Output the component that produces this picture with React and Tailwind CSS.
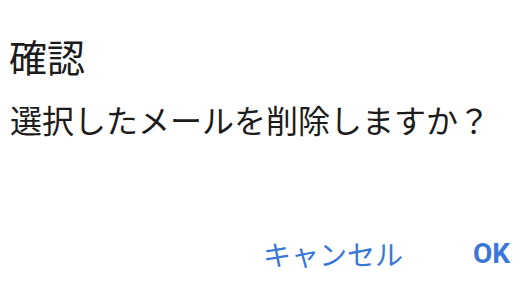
export default function App() {
  return (
    <div
      className="w-[530px] h-[288px] bg-white flex flex-col"
      style={{ fontFamily: '"Noto Sans CJK JP", "Noto Sans", sans-serif' }}
    >
      <div className="pl-[9px] pt-[35px] text-[38px] leading-[42px] font-normal text-[#1c1c1c]">確認</div>
      <div className="pl-[10px] pt-[22px] text-[32px] leading-[40px] text-[#1c1c1c]">
        選択したメールを削除しますか？
      </div>
      <div className="mt-auto mb-[16px] flex items-center justify-end gap-[70px] pr-[20px] text-[#3a77d6]">
        <button className="text-[28px] leading-[36px]">キャンセル</button>
        <button className="text-[28px] leading-[36px] font-bold" style={{ fontFamily: 'Roboto, "Noto Sans", sans-serif' }}>OK</button>
      </div>
    </div>
  );
}
